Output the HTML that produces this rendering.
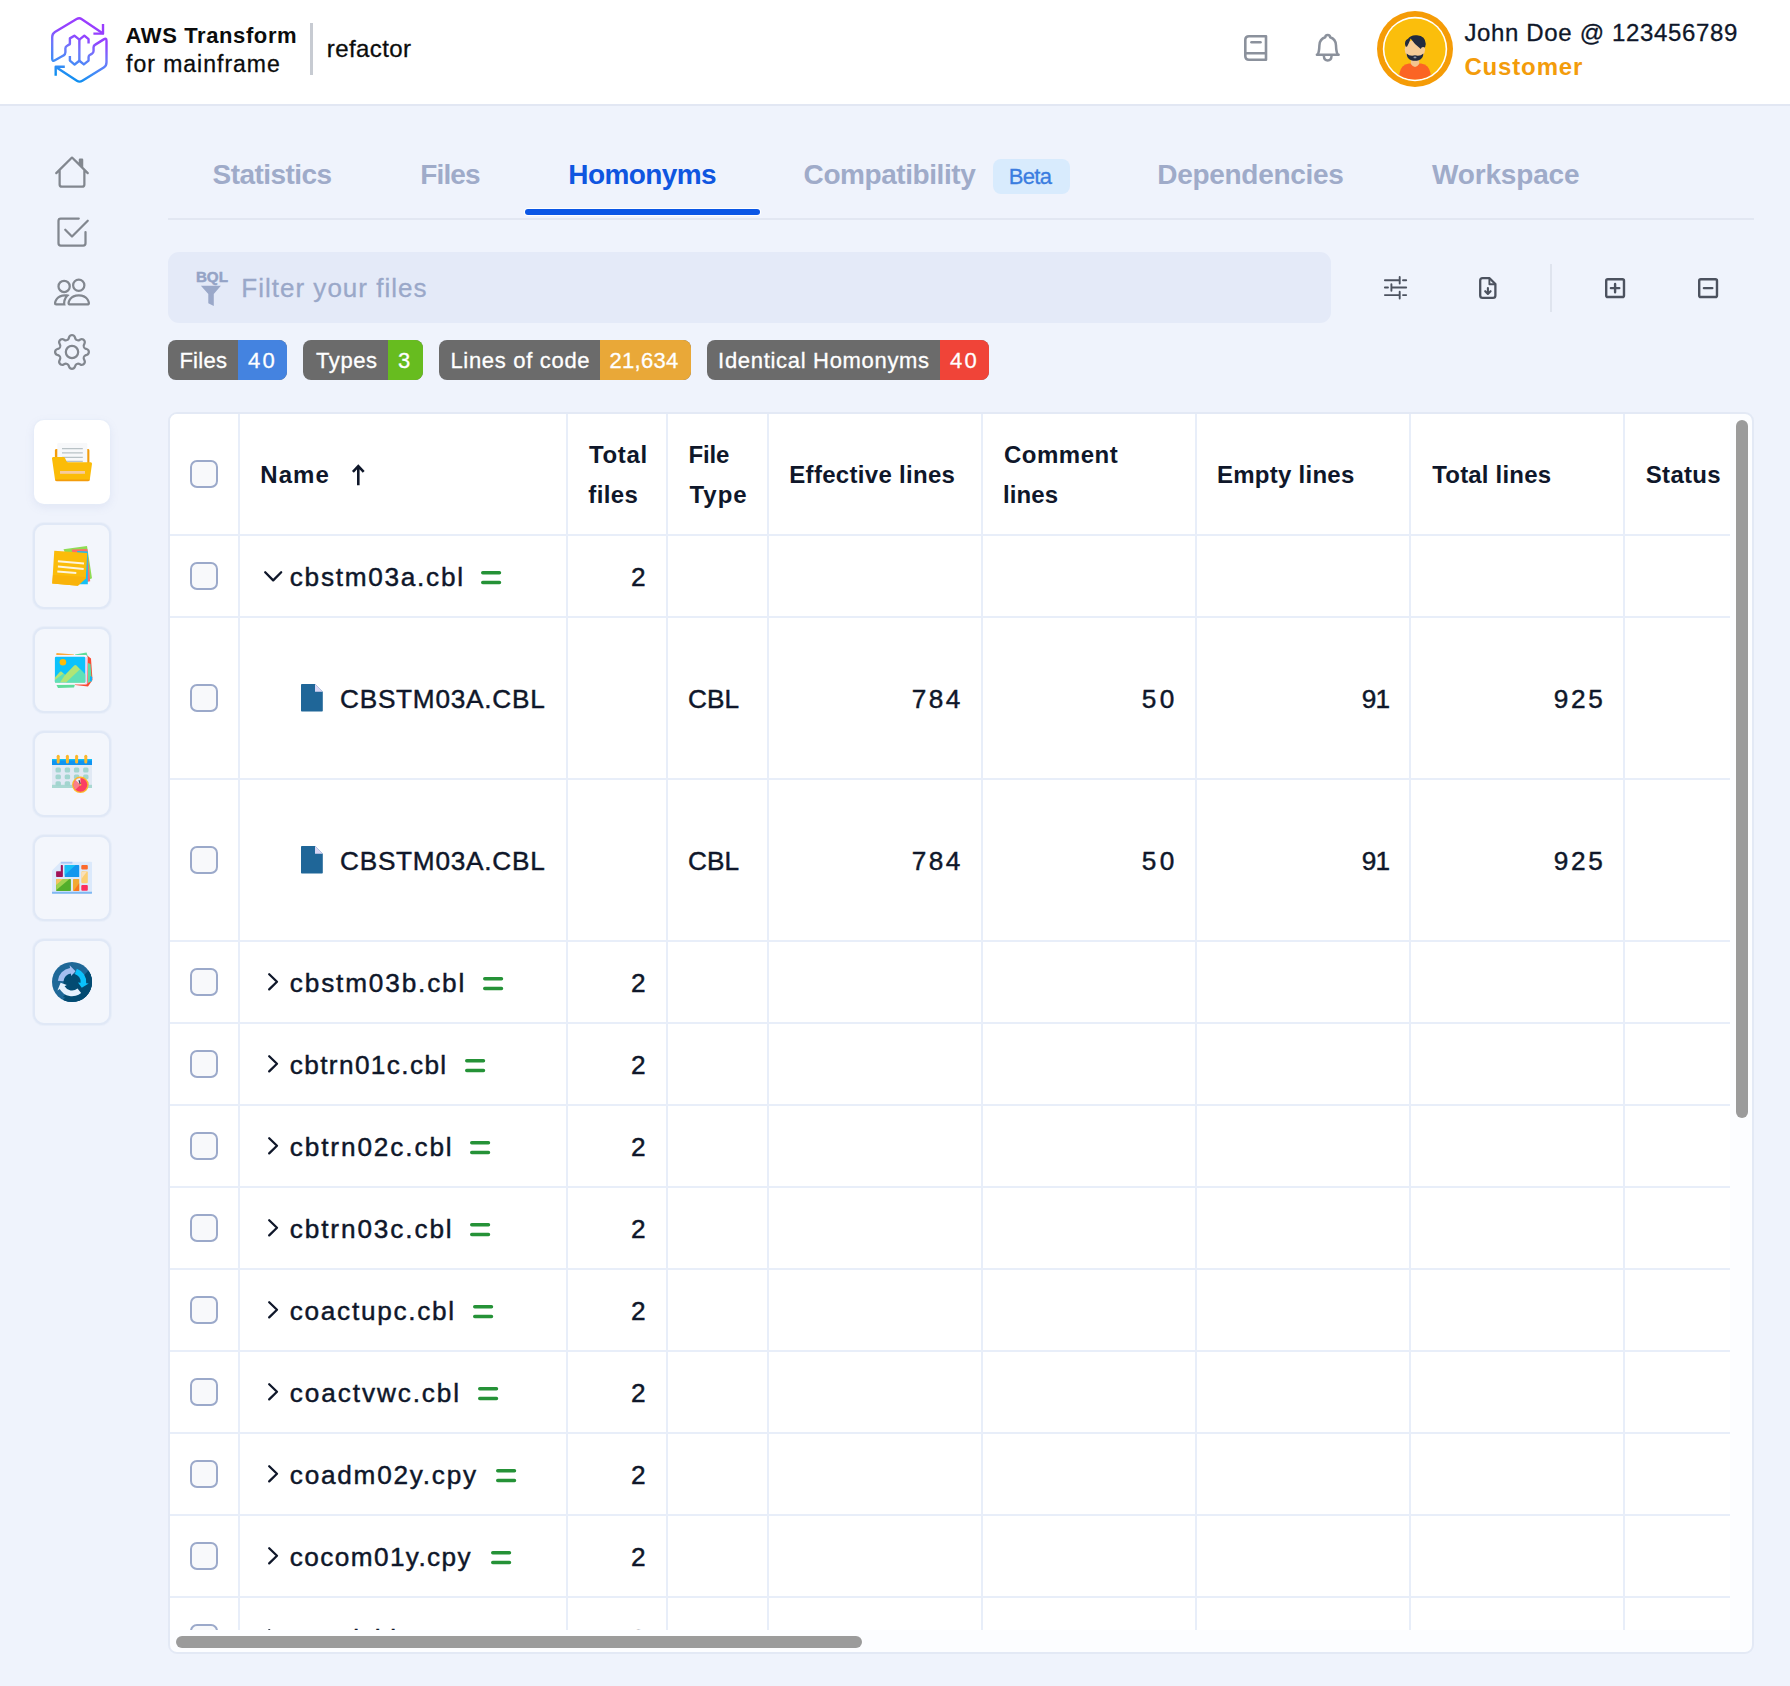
<!DOCTYPE html>
<html lang="en"><head><meta charset="utf-8"><title>AWS Transform for mainframe - refactor</title>
<style>
*{box-sizing:border-box}
html,body{margin:0;padding:0}
@media (max-width:900px){html{zoom:.5}}
body{width:1790px;height:1686px;overflow:hidden;background:#eff3fc;font-family:"Liberation Sans",sans-serif;position:relative}
.t{position:absolute;white-space:nowrap;line-height:1}
.td{-webkit-text-stroke:.45px currentColor}
.bql{-webkit-text-stroke:.5px currentColor}
.uname,.ph,.bdg,.beta,.refac,.aws2{-webkit-text-stroke:.3px currentColor}
.abs{position:absolute}
svg{position:absolute;overflow:visible}
header{position:absolute;left:0;top:0;width:1790px;height:106px;background:#fff;border-bottom:2px solid #e2e7f3}
.vdiv{position:absolute;left:310px;top:23px;width:2.6px;height:52px;background:#c7cbd2}
.card{position:absolute;left:33px;width:78px;height:86px;border:2px solid #e0e8f6;border-radius:11px;background:#f3f6fc;box-shadow:0 0 0 1px rgba(224,232,246,.45)}
.card.on{background:#fff;border:0;margin:1px;width:76px;height:84px;border-radius:10px;box-shadow:0 0 0 1px rgba(230,236,248,.6),0 3px 10px rgba(120,140,190,.13)}
.tabline{position:absolute;left:168px;top:218px;width:1586px;height:2px;background:#e2e7f2}
.tabul{position:absolute;left:525px;top:209px;width:235px;height:6px;border-radius:3px;background:#0b57e6;box-shadow:0 0 0 1px #fff}
.betab{position:absolute;left:993px;top:159px;width:77px;height:35px;border-radius:8px;background:#d8ebfd}
.filter{position:absolute;left:168px;top:252px;width:1163px;height:71px;border-radius:11px;background:#e4eaf8}
.tdiv{position:absolute;left:1550px;top:264px;width:2px;height:48px;background:#dfe4ee}
.bd{position:absolute;top:340px;height:40px;border-radius:8px;background:#6b6b6b;overflow:hidden}
.bd i{position:absolute;top:0;right:0;height:40px}
.tbl{position:absolute;left:168px;top:412px;width:1586px;height:1242px;border:2px solid #e3e9f5;border-radius:9px;background:#fcfdff;overflow:hidden}
.view{position:absolute;left:0;top:0;width:1560px;height:1216px;background:#fff;overflow:hidden}
.hl{position:absolute;left:0;width:1560px;height:2px;background:#e8eef9}
.vl{position:absolute;top:0;width:2px;height:1216px;background:#e8eef9}
.cb{position:absolute;left:20px;width:28px;height:28px;border:2px solid #9ba9ca;border-radius:7px;background:#f8f9fb}
.sbv{position:absolute;left:1566px;top:6px;width:12px;height:698px;border-radius:6px;background:#9b9b9b}
.sbh{position:absolute;left:6px;top:1222px;width:686px;height:12px;border-radius:6px;background:#9b9b9b}
.aws1{font-size:22px;font-weight:700;color:#0b0c0c}
.aws2{font-size:23px;font-weight:400;color:#0b0c0c}
.refac{font-size:24px;font-weight:400;color:#0b0c0c}
.uname{font-size:24px;font-weight:400;color:#0f172a}
.urole{font-size:24px;font-weight:700;color:#f39c0b}
.tab{font-size:28px;font-weight:700;color:#9fabc9}
.tabon{font-size:28px;font-weight:700;color:#0f56e0}
.beta{font-size:22px;font-weight:400;color:#3b7de0}
.bql{font-size:15.2px;font-weight:700;color:#94a3c6}
.ph{font-size:26px;font-weight:400;color:#9aa8c9}
.bdg{font-size:22px;font-weight:400;color:#ffffff}
.th{font-size:24px;font-weight:700;color:#0f172a}
.td{font-size:26.2px;font-weight:400;color:#0f172a}
</style></head>
<body>
<header>
<svg style="left:40px;top:8px" width="80" height="84" viewBox="0 0 1606 1686" ><defs><linearGradient id="lg" gradientUnits="userSpaceOnUse" x1="1000" y1="300" x2="600" y2="1450"><stop offset="0" stop-color="#9a3dff"/><stop offset=".25" stop-color="#9242ff"/><stop offset=".5" stop-color="#6f78fb"/><stop offset=".78" stop-color="#3f8cf6"/><stop offset="1" stop-color="#0a8ff0"/></linearGradient></defs><g fill="none" stroke="url(#lg)" stroke-width="48" stroke-linejoin="round" stroke-linecap="butt"><path d="M1265 510 L840 225 Q790 190 735 222 L300 480 Q245 515 245 580 L245 1020 Q245 1080 300 1050 L470 955 Q510 935 510 890 L510 810 Q510 775 545 757 L600 725 L600 610 L690 555 L790 635 L790 1060"/><path d="M1265 322 L1265 515 L1072 515"/><path d="M790 635 L890 555 L975 625 L975 715"/><path d="M600 965 L600 1055 L695 1135 L790 1058 L880 1132 L975 1055 L975 985 Q975 950 1010 935 L1040 920 Q1075 903 1075 865 L1075 790 Q1075 755 1110 735 L1280 630 Q1335 595 1335 660 L1335 1090 Q1335 1160 1280 1195 L850 1460 Q795 1495 740 1460 L318 1182"/><path d="M498 1180 L315 1180 L315 1362"/></g></svg>
<span class="t aws1" style="left:125.6px;top:25.0px;letter-spacing:0.6px;">AWS Transform</span>
<span class="t aws2" style="left:126.0px;top:52.5px;letter-spacing:0.99px;">for mainframe</span>
<div class="vdiv"></div>
<span class="t refac" style="left:326.8px;top:36.7px;letter-spacing:0.42px;">refactor</span>
<svg style="left:1244px;top:35px" width="24" height="26" viewBox="0 0 24 26" ><g fill="none" stroke="#8b919c" stroke-width="2.6" stroke-linejoin="round" stroke-linecap="round"><path d="M5 1.3 H22 V24.7 H5 Q1.3 24.7 1.3 21 V5 Q1.3 1.3 5 1.3 Z"/><path d="M1.3 18.3 H21.4"/><path d="M7.5 7.2 H16.5"/></g></svg>
<svg style="left:1314px;top:33px" width="28" height="30" viewBox="0 0 28 30" ><g fill="none" stroke="#8b919c" stroke-width="2.5" stroke-linecap="round" stroke-linejoin="round"><path d="M2.9 21.8 H24.6"/><path d="M3.9 21.2 C5.1 19 5.3 15 5.4 12.4 C5.6 8 8 5.2 11.3 4.3 C11.3 2.5 12.4 1.9 13.7 1.9 C15 1.9 16.1 2.5 16.1 4.3 C19.4 5.2 21.8 8 22 12.4 C22.1 15 22.3 19 23.5 21.2"/><path d="M9.9 23.3 C10.2 28.8 17.2 28.8 17.5 23.3"/></g></svg>
<svg style="left:1377px;top:11px" width="76" height="76" viewBox="0 0 76 76" ><defs><clipPath id="avc"><circle cx="38" cy="38" r="30.5"/></clipPath></defs><circle cx="38" cy="38" r="38" fill="#f59c07"/><circle cx="38" cy="38" r="32.2" fill="#fff"/><circle cx="38" cy="38" r="30.6" fill="#fbbe0c"/><g clip-path="url(#avc)"><path d="M21.5 70 L22.5 62 Q24 54 32 52.6 L44 52.6 Q52 54 53.5 62 L54.5 70 Z" fill="#fb6424"/><path d="M33.8 47 L33.8 53 Q38 59 42.2 53 L42.2 47 Z" fill="#f3c58f"/><ellipse cx="37.9" cy="38.6" rx="10.2" ry="9.6" fill="#f6cc96"/><path d="M28.6 35.5 Q26.6 30 31 27.8 Q34 23.5 40 24.3 Q48.5 25 48.8 33 L48 36.5 Q44.5 35.2 43.8 38 Q37 33 33.6 27.6 Q31.8 33 30 35.8 Z" fill="#222b3f"/><path d="M29.6 42.4 Q33 45.6 38 44.2 Q43 45.6 46.4 42.4 Q46.2 47.6 41.8 49.2 Q38 50.4 34.2 49.2 Q29.8 47.6 29.6 42.4 Z" fill="#222b3f"/><ellipse cx="38" cy="46.4" rx="1.5" ry=".9" fill="#8f97a6"/></g></svg>
<span class="t uname" style="left:1464.4px;top:20.7px;letter-spacing:0.65px;">John Doe @ 123456789</span>
<span class="t urole" style="left:1464.4px;top:55.3px;letter-spacing:0.85px;">Customer</span>
</header>
<nav>
<svg style="left:54px;top:154px" width="36" height="36" viewBox="0 0 16 16" ><path fill="#82878f" fill-rule="evenodd" d="M8.707 1.5a1 1 0 0 0-1.414 0L.646 8.146a.5.5 0 0 0 .708.708L2 8.207V13.5A1.5 1.5 0 0 0 3.5 15h9a1.5 1.5 0 0 0 1.5-1.5V8.207l.646.647a.5.5 0 0 0 .708-.708L13 5.793V2.5a.5.5 0 0 0-.5-.5h-1a.5.5 0 0 0-.5.5v1.293L8.707 1.5ZM13 7.207V13.5a.5.5 0 0 1-.5.5h-9a.5.5 0 0 1-.5-.5V7.207l5-5 5 5Z"/></svg>
<svg style="left:54px;top:214px" width="36" height="36" viewBox="0 0 16 16" ><path fill="#82878f" fill-rule="evenodd" d="M3 14.5A1.5 1.5 0 0 1 1.5 13V3A1.5 1.5 0 0 1 3 1.5h8a.5.5 0 0 1 0 1H3a.5.5 0 0 0-.5.5v10a.5.5 0 0 0 .5.5h10a.5.5 0 0 0 .5-.5V8a.5.5 0 0 1 1 0v5a1.5 1.5 0 0 1-1.5 1.5H3z M8.354 10.354l7-7a.5.5 0 0 0-.708-.708L8 9.293 5.354 6.646a.5.5 0 1 0-.708.708l3 3a.5.5 0 0 0 .708 0z"/></svg>
<svg style="left:54px;top:274px" width="36" height="36" viewBox="0 0 16 16" ><path fill="#82878f" fill-rule="evenodd" d="M15 14s1 0 1-1-1-4-5-4-5 3-5 4 1 1 1 1h8Zm-7.978-1A.261.261 0 0 1 7 12.996c.001-.264.167-1.03.76-1.72C8.312 10.629 9.282 10 11 10c1.717 0 2.687.63 3.24 1.276.593.69.758 1.457.76 1.72l-.008.002a.274.274 0 0 1-.014.002H7.022ZM11 7a2 2 0 1 0 0-4 2 2 0 0 0 0 4Zm3-2a3 3 0 1 1-6 0 3 3 0 0 1 6 0ZM6.936 9.28a5.88 5.88 0 0 0-1.23-.247A7.35 7.35 0 0 0 5 9c-4 0-5 3-5 4 0 .667.333 1 1 1h4.216A2.238 2.238 0 0 1 5 13c0-1.01.377-2.042 1.09-2.904.243-.294.526-.569.846-.816ZM4.92 10A5.493 5.493 0 0 0 4 13H1c0-.26.164-1.03.76-1.724.545-.636 1.492-1.256 3.16-1.275ZM1.5 5.5a3 3 0 1 1 6 0 3 3 0 0 1-6 0Zm3-2a2 2 0 1 0 0 4 2 2 0 0 0 0-4Z"/></svg>
<svg style="left:54px;top:334px" width="36" height="36" viewBox="0 0 16 16" ><path fill="#82878f" fill-rule="evenodd" d="M8 4.754a3.246 3.246 0 1 0 0 6.492 3.246 3.246 0 0 0 0-6.492zM5.754 8a2.246 2.246 0 1 1 4.492 0 2.246 2.246 0 0 1-4.492 0z M9.796 1.343c-.527-1.79-3.065-1.79-3.592 0l-.094.319a.873.873 0 0 1-1.255.52l-.292-.16c-1.64-.892-3.433.902-2.54 2.541l.159.292a.873.873 0 0 1-.52 1.255l-.319.094c-1.79.527-1.79 3.065 0 3.592l.319.094a.873.873 0 0 1 .52 1.255l-.16.292c-.892 1.64.901 3.434 2.541 2.54l.292-.159a.873.873 0 0 1 1.255.52l.094.319c.527 1.79 3.065 1.79 3.592 0l.094-.319a.873.873 0 0 1 1.255-.52l.292.16c1.64.893 3.434-.902 2.54-2.541l-.159-.292a.873.873 0 0 1 .52-1.255l.319-.094c1.79-.527 1.79-3.065 0-3.592l-.319-.094a.873.873 0 0 1-.52-1.255l.16-.292c.893-1.64-.902-3.433-2.541-2.54l-.292.159a.873.873 0 0 1-1.255-.52l-.094-.319zm-2.633.283c.246-.835 1.428-.835 1.674 0l.094.319a1.873 1.873 0 0 0 2.693 1.115l.291-.16c.764-.415 1.6.42 1.184 1.185l-.159.292a1.873 1.873 0 0 0 1.116 2.692l.318.094c.835.246.835 1.428 0 1.674l-.319.094a1.873 1.873 0 0 0-1.115 2.693l.16.291c.415.764-.42 1.6-1.185 1.184l-.291-.159a1.873 1.873 0 0 0-2.693 1.116l-.094.318c-.246.835-1.428.835-1.674 0l-.094-.319a1.873 1.873 0 0 0-2.692-1.115l-.292.16c-.764.415-1.6-.42-1.184-1.185l.159-.291A1.873 1.873 0 0 0 1.945 8.93l-.319-.094c-.835-.246-.835-1.428 0-1.674l.319-.094A1.873 1.873 0 0 0 3.06 4.377l-.16-.292c-.415-.764.42-1.6 1.185-1.184l.292.159a1.873 1.873 0 0 0 2.692-1.115l.094-.319z"/></svg>
<div class="card on" style="top:419px"></div>
<svg style="left:33px;top:419px" width="78" height="86" viewBox="0 0 78 86" ><path d="M56.3 449 H88 Q89.4 449 89.4 450.4 V466 H54.9 V450.4 Q54.9 449 56.3 449Z" fill="#f39c0b" transform="translate(-33,-419)"/><g transform="translate(-33,-419)"><rect x="57.3" y="443" width="30" height="21" rx="1.2" fill="#f7f8fa"/><g stroke="#b9c2c6" stroke-width="1.3"><path d="M62 448.6H82.8M62 452.8H82.8M62 457.4H82.8M66 461.4H82.8"/></g><path d="M53.2 457.1 H63.6 Q64.6 457.1 65 458 L66.6 461.6 Q67 462.3 68 462.3 H90.6 Q92.2 462.3 92 463.8 L89.8 479.6 Q89.6 481 88.2 481 H56.6 Q55.2 481 55 479.6 L52 458.6 Q51.8 457.1 53.2 457.1Z" fill="#fbbc08"/><path d="M55 479.6 Q55.2 481.2 56.6 481.2 H88.2 Q89.6 481.2 89.8 479.6 Z" fill="#f39c0b"/><rect x="60" y="471" width="25" height="2.8" fill="#f6cb9d"/></g></svg>
<div class="card" style="top:523px"></div>
<svg style="left:33px;top:523px" width="78" height="86" viewBox="0 0 78 86" ><g transform="translate(-33,-523)"><polygon points="63.5,549.2 87,546 92,578.3 78,584.6" fill="#8fdc54"/><polygon points="71.8,549.5 87.3,549 90.2,581.2 78,584" fill="#fb6d6d"/><polygon points="77.2,551 87.8,551.6 87.8,584.2 78,584.2" fill="#16c0f6"/><polygon points="54.3,550.7 87.2,553.1 85.8,578.3 77.8,585.7 52.2,583.6" fill="#fbbc0a"/><polygon points="53,575 86,577 85.8,578.3 77.8,585.7 52.2,583.6" fill="#f9b30a"/><g stroke="#fdf4dc" stroke-width="2" stroke-linecap="butt"><path d="M57.9 561.2 L84 563.5 M57.9 566.6 L83.7 568.9 M57.3 571.5 L76.3 573"/></g></g></svg>
<div class="card" style="top:627px"></div>
<svg style="left:33px;top:627px" width="78" height="86" viewBox="0 0 78 86" ><g transform="translate(-33,-627)"><polygon points="56.5,653 74,654.5 73,658 56,657" fill="#fba93a"/><polygon points="75,654.5 86.5,652.4 88,657 76,658" fill="#5fdc9a"/><polygon points="87.5,655.8 91,658.5 92.5,680 88,686.5 75,685 75,680 87,680" fill="#fb4a33"/><polygon points="88,663 90.5,664 91.8,681 88,683" fill="#5fdca5"/><polygon points="90,676 92.3,677 91.7,681.5 89.8,681" fill="#12b3f6"/><polygon points="56.5,685 75,684.5 74,687.6 58,688" fill="#5fdc9a"/><rect x="52.8" y="655" width="34.4" height="29.6" rx="1.5" fill="#f7f5fd"/><rect x="85.2" y="657" width="2" height="27" fill="#e3d8fb"/><rect x="54.9" y="656.8" width="30.3" height="25.8" rx="1.2" fill="#0cc2fb"/><circle cx="62.9" cy="662.2" r="3.3" fill="#fbbc0a"/><path d="M54.9 677.5 L60 671.8 Q60.8 671 61.7 671.8 L65 675 L74.2 665.6 Q75.4 664.6 76.5 665.6 L85.2 674.5 V681.4 Q85.2 682.6 84 682.6 H56.1 Q54.9 682.6 54.9 681.4Z" fill="#b0e576"/><path d="M54.9 680 L63.5 673.5 L65 675 L60 682.6 H56.1 Q54.9 682.6 54.9 681.4Z M66 682.6 L80 669.3 L85.2 674.5 V681.4 Q85.2 682.6 84 682.6Z" fill="#5fe0b8"/></g></svg>
<div class="card" style="top:731px"></div>
<svg style="left:33px;top:731px" width="78" height="86" viewBox="0 0 78 86" ><g transform="translate(-33,-731)"><rect x="52" y="764" width="40" height="24" rx="1" fill="#e1e9f4"/><rect x="52" y="784.8" width="40" height="3.2" fill="#a9d8d2"/><rect x="55.5" y="767.6" width="5.4" height="4.8" rx="1.5" fill="#a2d5cf"/><rect x="55.5" y="774.4" width="5.4" height="4.8" rx="1.5" fill="#a2d5cf"/><rect x="55.5" y="781.2" width="5.4" height="4.8" rx="1.5" fill="#a2d5cf"/><rect x="64.7" y="767.6" width="5.4" height="4.8" rx="1.5" fill="#a2d5cf"/><rect x="64.7" y="774.4" width="5.4" height="4.8" rx="1.5" fill="#a2d5cf"/><rect x="64.7" y="781.2" width="5.4" height="4.8" rx="1.5" fill="#a2d5cf"/><rect x="73.89999999999999" y="767.6" width="5.4" height="4.8" rx="1.5" fill="#a2d5cf"/><rect x="73.89999999999999" y="774.4" width="5.4" height="4.8" rx="1.5" fill="#a2d5cf"/><rect x="73.89999999999999" y="781.2" width="5.4" height="4.8" rx="1.5" fill="#a2d5cf"/><rect x="83.1" y="767.6" width="5.4" height="4.8" rx="1.5" fill="#a2d5cf"/><rect x="83.1" y="774.4" width="5.4" height="4.8" rx="1.5" fill="#a2d5cf"/><rect x="83.1" y="781.2" width="5.4" height="4.8" rx="1.5" fill="#a2d5cf"/><path d="M53 759 H91 Q92 759 92 760 V765 H52 V760 Q52 759 53 759Z" fill="#1094f1"/><rect x="52" y="759" width="40" height="1.4" fill="#0cc2fb"/><rect x="56.7" y="754.8" width="3" height="8.8" rx="1.5" fill="#fbb92c"/><rect x="65.9" y="754.8" width="3" height="8.8" rx="1.5" fill="#fbb92c"/><rect x="75.1" y="754.8" width="3" height="8.8" rx="1.5" fill="#fbb92c"/><rect x="84.3" y="754.8" width="3" height="8.8" rx="1.5" fill="#fbb92c"/><circle cx="80.4" cy="784.8" r="8.3" fill="#fbb92c"/><circle cx="80.4" cy="784.8" r="6.9" fill="#fb3f63"/><path d="M80.4 784.8 L75.5 779.9 A6.9 6.9 0 0 0 75.5 789.7Z" fill="#f9808a"/><path d="M80.4 784.8 L80.4 777.9 A6.9 6.9 0 0 0 75.5 779.9Z" fill="#eef1f6"/><path d="M80.4 784.8 L79 780.2" stroke="#353b4d" stroke-width="1.2" fill="none"/><circle cx="80.4" cy="784.8" r="1" fill="#fbb92c"/></g></svg>
<div class="card" style="top:835px"></div>
<svg style="left:33px;top:835px" width="78" height="86" viewBox="0 0 78 86" ><g transform="translate(-33,-835)"><path d="M60.8 861.8 H91.1 Q92.0 861.8 92.0 862.7 V892.9 Q92.0 893.8 91.1 893.8 H52.8 Q52.0 893.8 52.0 892.9 V870.4 Z" fill="#dbe9fb"/><path d="M52.0 891.8 H92.0 V892.9 Q92.0 893.8 91.1 893.8 H52.8 Q52.0 893.8 52.0 892.9Z" fill="#7fb8f2"/><path d="M60.8 861.8 H72.4 V863.6 H60.8Z" fill="#a9c6f5"/><rect x="60.8" y="865.1" width="2.1" height="6.8" rx="0.6" fill="#a01358"/><rect x="56.1" y="871.3" width="6.8" height="5.6" rx="0.6" fill="#a01358"/><rect x="64.7" y="865.1" width="14.5" height="11.9" rx="0.6" fill="#1397ee"/><polygon points="64.7,865.1 75.7,865.1 64.7,874.9" fill="#17c0f6"/><rect x="81.3" y="865.1" width="6.5" height="4.4" rx="1" fill="#fb6a2d"/><rect x="81.3" y="871.3" width="6.5" height="11.9" rx="1.2" fill="#fbcf72"/><polygon points="81.3,871.9 87.2,871.3 81.3,879.0" fill="#f9e0b8"/><rect x="56.1" y="879.0" width="14.8" height="11.9" rx="0.6" fill="#52ae2b"/><polygon points="56.1,879.0 69.4,879.0 56.1,890.3" fill="#a0d24f"/><polygon points="56.1,879.0 62.9,879.0 56.1,884.9" fill="#f8c163"/><rect x="73.0" y="879.0" width="6.2" height="11.9" rx="0.6" fill="#f2a933"/><polygon points="79.2,883.2 79.2,890.9 73.6,890.9" fill="#f9761f"/><rect x="81.3" y="884.9" width="6.5" height="5.9" rx="1" fill="#fb2d5d"/></g></svg>
<div class="card" style="top:939px"></div>
<svg style="left:33px;top:939px" width="78" height="86" viewBox="0 0 78 86" ><defs><clipPath id="syc"><circle cx="39" cy="43" r="20"/></clipPath></defs><circle cx="39" cy="43" r="20" fill="#1e6898"/><g clip-path="url(#syc)"><polygon points="62,28 62,66 25,66 " fill="#034b72"/><polygon points="55.5,31.5 62,28 62,66 30,58" fill="#034b72"/><circle cx="39" cy="43" r="8.6" fill="#034b72"/></g><path d="M24.85 41.76 A14.2 14.2 0 0 1 37.02 28.94 L36.66 26.36 L42.52 32.16 L38.16 37.06 L37.80 34.48 A8.6 8.6 0 0 0 30.43 42.25Z" fill="#a5bff0"/><path d="M43.86 29.66 A14.2 14.2 0 0 1 53.15 44.24 L55.74 44.46 L48.77 48.87 L44.98 43.52 L47.57 43.75 A8.6 8.6 0 0 0 41.94 34.92Z" fill="#0bc1fb"/><path d="M48.13 53.88 A14.2 14.2 0 0 1 26.70 50.10 L24.45 51.40 L27.63 43.80 L33.80 46.00 L31.55 47.30 A8.6 8.6 0 0 0 44.53 49.59Z" fill="#e4f0fd"/></svg>
</nav>
<main>
<span class="t tab" style="left:212.6px;top:160.5px;letter-spacing:-0.55px;">Statistics</span>
<span class="t tab" style="left:420.3px;top:160.5px;letter-spacing:-0.88px;">Files</span>
<span class="t tabon" style="left:568.3px;top:160.5px;letter-spacing:-0.6px;">Homonyms</span>
<span class="t tab" style="left:803.6px;top:160.5px;letter-spacing:-0.43px;">Compatibility</span>
<div class="betab"></div>
<span class="t beta" style="left:1008.7px;top:166.0px;letter-spacing:-0.67px;">Beta</span>
<span class="t tab" style="left:1157.3px;top:160.5px;letter-spacing:-0.3px;">Dependencies</span>
<span class="t tab" style="left:1432.0px;top:160.5px;letter-spacing:-0.16px;">Workspace</span>
<div class="tabline"></div><div class="tabul"></div>
<div class="filter"></div>
<span class="t bql" style="left:195.9px;top:269.3px;letter-spacing:0.01px;">BQL</span>
<svg style="left:201px;top:286px" width="19.7" height="19.7" viewBox="0 0 19.7 19.7" ><path d="M-0.1 -0.2 H19.9 L12.8 7.9 V19.9 L7.3 17.2 V7.9 Z" fill="#9aa8c9"/></svg>
<span class="t ph" style="left:241.3px;top:275.0px;letter-spacing:1.01px;">Filter your files</span>
<svg style="left:1383.6px;top:276.1px" width="23.1" height="23.5" viewBox="0 0 23.1 23.5" ><g stroke="#4c525f" stroke-width="1.9" fill="none" stroke-linecap="round"><path d="M0.9 4.2 H15.7 M19 4.2 H22.2 M15.7 0.9 V7.5"/><path d="M0.9 11.5 H4 M7.4 11.5 H22.2 M7.4 8.2 V14.8"/><path d="M0.9 19.1 H15.7 M19 19.1 H22.2 M15.7 15.8 V22.6"/></g></svg>
<svg style="left:1479.4px;top:277px" width="17.2" height="22" viewBox="0 0 17.2 22" ><g stroke="#4c525f" stroke-width="2.3" fill="none" stroke-linejoin="round" stroke-linecap="round"><path d="M3.6 1.2 H10.6 L16.4 7 V18.4 Q16.4 20.8 14 20.8 H3.6 Q1.2 20.8 1.2 18.4 V3.6 Q1.2 1.2 3.6 1.2Z"/><path d="M10.4 1.8 V7.2 H16" stroke-width="1.9"/><path d="M8.9 11 V16.4 M6.2 14.2 L8.9 16.9 L11.6 14.2" stroke-width="2.1"/></g></svg>
<div class="tdiv"></div>
<svg style="left:1605.3px;top:278.2px" width="20.2" height="20.2" viewBox="0 0 20.2 20.2" ><g stroke="#4c525f" stroke-width="2.4" fill="none" stroke-linecap="round"><rect x="1.2" y="1.2" width="17.8" height="17.8" rx="1.6"/><path d="M5.9 10.1 H14.3 M10.1 5.9 V14.3"/></g></svg>
<svg style="left:1698px;top:278.2px" width="20.2" height="20.2" viewBox="0 0 20.2 20.2" ><g stroke="#4c525f" stroke-width="2.4" fill="none" stroke-linecap="round"><rect x="1.2" y="1.2" width="17.8" height="17.8" rx="1.6"/><path d="M5.9 10.1 H14.3"/></g></svg>
<div class="bd" style="left:168px;width:119px"><i style="width:49px;background:#4483e0"></i></div>
<span class="t bdg" style="left:179.4px;top:349.6px;letter-spacing:0.29px;">Files</span>
<span class="t bdg" style="left:248.0px;top:349.6px;letter-spacing:2.26px;">40</span>
<div class="bd" style="left:303px;width:120px"><i style="width:35px;background:#67bc1f"></i></div>
<span class="t bdg" style="left:316.0px;top:349.6px;letter-spacing:0.58px;">Types</span>
<span class="t bdg" style="left:398.0px;top:349.6px;">3</span>
<div class="bd" style="left:439px;width:252px"><i style="width:91px;background:#e9a838"></i></div>
<span class="t bdg" style="left:450.4px;top:349.6px;letter-spacing:0.69px;">Lines of code</span>
<span class="t bdg" style="left:609.6px;top:349.6px;letter-spacing:0.27px;">21,634</span>
<div class="bd" style="left:707px;width:282px"><i style="width:49px;background:#f04438"></i></div>
<span class="t bdg" style="left:718.1px;top:349.6px;letter-spacing:0.69px;">Identical Homonyms</span>
<span class="t bdg" style="left:950.0px;top:349.6px;letter-spacing:2.16px;">40</span>
<div class="tbl"><div class="view">
<div class="hl" style="top:120px"></div>
<div class="hl" style="top:202px"></div>
<div class="hl" style="top:364px"></div>
<div class="hl" style="top:526px"></div>
<div class="hl" style="top:608px"></div>
<div class="hl" style="top:690px"></div>
<div class="hl" style="top:772px"></div>
<div class="hl" style="top:854px"></div>
<div class="hl" style="top:936px"></div>
<div class="hl" style="top:1018px"></div>
<div class="hl" style="top:1100px"></div>
<div class="hl" style="top:1182px"></div>
<div class="vl" style="left:68px"></div>
<div class="vl" style="left:396px"></div>
<div class="vl" style="left:496px"></div>
<div class="vl" style="left:597px"></div>
<div class="vl" style="left:811px"></div>
<div class="vl" style="left:1025px"></div>
<div class="vl" style="left:1239px"></div>
<div class="vl" style="left:1453px"></div>
<div class="cb" style="top:46px"></div>
<div class="cb" style="top:148px"></div>
<div class="cb" style="top:270px"></div>
<div class="cb" style="top:432px"></div>
<div class="cb" style="top:554px"></div>
<div class="cb" style="top:636px"></div>
<div class="cb" style="top:718px"></div>
<div class="cb" style="top:800px"></div>
<div class="cb" style="top:882px"></div>
<div class="cb" style="top:964px"></div>
<div class="cb" style="top:1046px"></div>
<div class="cb" style="top:1128px"></div>
<div class="cb" style="top:1210px"></div>
<span class="t th" style="left:90.3px;top:48.7px;letter-spacing:1.03px;">Name</span>
<svg style="left:182.10000000000002px;top:50.10000000000002px" width="12.6" height="21.2" viewBox="0 0 12.6 21.2" ><g stroke="#0f172a" stroke-width="2.6" fill="none" stroke-linecap="butt" stroke-linejoin="miter"><path d="M6.3 21.2 V1.6 M0.9 7.9 L6.3 2.2 L11.7 7.9"/></g></svg>
<span class="t th" style="left:419.0px;top:28.7px;letter-spacing:0.66px;">Total</span>
<span class="t th" style="left:418.3px;top:68.7px;letter-spacing:0.36px;">files</span>
<span class="t th" style="left:518.5px;top:28.7px;letter-spacing:-0.13px;">File</span>
<span class="t th" style="left:519.5px;top:68.7px;letter-spacing:0.97px;">Type</span>
<span class="t th" style="left:619.3px;top:48.7px;letter-spacing:0.3px;">Effective lines</span>
<span class="t th" style="left:833.9px;top:28.7px;letter-spacing:0.54px;">Comment</span>
<span class="t th" style="left:832.9px;top:68.7px;letter-spacing:0.16px;">lines</span>
<span class="t th" style="left:1047.0px;top:48.7px;letter-spacing:0.26px;">Empty lines</span>
<span class="t th" style="left:1262.2px;top:48.7px;letter-spacing:0.2px;">Total lines</span>
<span class="t th" style="left:1475.8px;top:48.7px;letter-spacing:0.3px;">Status</span>
<svg style="left:93.60000000000002px;top:157.29999999999995px" width="18.4" height="10.7" viewBox="0 0 18.4 10.7" ><path d="M1.2 1.2 L9.2 9.4 L17.2 1.2" stroke="#0f172a" stroke-width="2.3" fill="none" stroke-linecap="round" stroke-linejoin="round"/></svg>
<span class="t td" style="left:119.8px;top:149.6px;letter-spacing:1.72px;">cbstm03a.cbl</span>
<svg style="left:311.4px;top:157px" width="20.2" height="13.2" viewBox="0 0 20.2 13.2" ><g stroke="#259237" stroke-width="3.5" stroke-linecap="round"><path d="M1.75 1.75 H18.5 M1.75 11.4 H18.5"/></g></svg>
<span class="t td" style="left:460.9px;top:149.6px;">2</span>
<svg style="left:98.19999999999999px;top:559.2px" width="10.2" height="17.6" viewBox="0 0 10.2 17.6" ><path d="M1.2 1.2 L9 8.8 L1.2 16.4" stroke="#0f172a" stroke-width="2.3" fill="none" stroke-linecap="round" stroke-linejoin="round"/></svg>
<span class="t td" style="left:119.8px;top:555.6px;letter-spacing:1.84px;">cbstm03b.cbl</span>
<svg style="left:312.7px;top:563px" width="20.2" height="13.2" viewBox="0 0 20.2 13.2" ><g stroke="#259237" stroke-width="3.5" stroke-linecap="round"><path d="M1.75 1.75 H18.5 M1.75 11.4 H18.5"/></g></svg>
<span class="t td" style="left:460.9px;top:555.6px;">2</span>
<svg style="left:98.19999999999999px;top:641.2px" width="10.2" height="17.6" viewBox="0 0 10.2 17.6" ><path d="M1.2 1.2 L9 8.8 L1.2 16.4" stroke="#0f172a" stroke-width="2.3" fill="none" stroke-linecap="round" stroke-linejoin="round"/></svg>
<span class="t td" style="left:119.8px;top:637.6px;letter-spacing:1.38px;">cbtrn01c.cbl</span>
<svg style="left:294.5px;top:645px" width="20.2" height="13.2" viewBox="0 0 20.2 13.2" ><g stroke="#259237" stroke-width="3.5" stroke-linecap="round"><path d="M1.75 1.75 H18.5 M1.75 11.4 H18.5"/></g></svg>
<span class="t td" style="left:460.9px;top:637.6px;">2</span>
<svg style="left:98.19999999999999px;top:723.2px" width="10.2" height="17.6" viewBox="0 0 10.2 17.6" ><path d="M1.2 1.2 L9 8.8 L1.2 16.4" stroke="#0f172a" stroke-width="2.3" fill="none" stroke-linecap="round" stroke-linejoin="round"/></svg>
<span class="t td" style="left:119.8px;top:719.6px;letter-spacing:1.88px;">cbtrn02c.cbl</span>
<svg style="left:300.0px;top:727px" width="20.2" height="13.2" viewBox="0 0 20.2 13.2" ><g stroke="#259237" stroke-width="3.5" stroke-linecap="round"><path d="M1.75 1.75 H18.5 M1.75 11.4 H18.5"/></g></svg>
<span class="t td" style="left:460.9px;top:719.6px;">2</span>
<svg style="left:98.19999999999999px;top:805.2px" width="10.2" height="17.6" viewBox="0 0 10.2 17.6" ><path d="M1.2 1.2 L9 8.8 L1.2 16.4" stroke="#0f172a" stroke-width="2.3" fill="none" stroke-linecap="round" stroke-linejoin="round"/></svg>
<span class="t td" style="left:119.8px;top:801.6px;letter-spacing:1.88px;">cbtrn03c.cbl</span>
<svg style="left:300.0px;top:809px" width="20.2" height="13.2" viewBox="0 0 20.2 13.2" ><g stroke="#259237" stroke-width="3.5" stroke-linecap="round"><path d="M1.75 1.75 H18.5 M1.75 11.4 H18.5"/></g></svg>
<span class="t td" style="left:460.9px;top:801.6px;">2</span>
<svg style="left:98.19999999999999px;top:887.2px" width="10.2" height="17.6" viewBox="0 0 10.2 17.6" ><path d="M1.2 1.2 L9 8.8 L1.2 16.4" stroke="#0f172a" stroke-width="2.3" fill="none" stroke-linecap="round" stroke-linejoin="round"/></svg>
<span class="t td" style="left:119.8px;top:883.6px;letter-spacing:1.7px;">coactupc.cbl</span>
<svg style="left:302.5px;top:891px" width="20.2" height="13.2" viewBox="0 0 20.2 13.2" ><g stroke="#259237" stroke-width="3.5" stroke-linecap="round"><path d="M1.75 1.75 H18.5 M1.75 11.4 H18.5"/></g></svg>
<span class="t td" style="left:460.9px;top:883.6px;">2</span>
<svg style="left:98.19999999999999px;top:969.2px" width="10.2" height="17.6" viewBox="0 0 10.2 17.6" ><path d="M1.2 1.2 L9 8.8 L1.2 16.4" stroke="#0f172a" stroke-width="2.3" fill="none" stroke-linecap="round" stroke-linejoin="round"/></svg>
<span class="t td" style="left:119.8px;top:965.6px;letter-spacing:1.9px;">coactvwc.cbl</span>
<svg style="left:307.5px;top:973px" width="20.2" height="13.2" viewBox="0 0 20.2 13.2" ><g stroke="#259237" stroke-width="3.5" stroke-linecap="round"><path d="M1.75 1.75 H18.5 M1.75 11.4 H18.5"/></g></svg>
<span class="t td" style="left:460.9px;top:965.6px;">2</span>
<svg style="left:98.19999999999999px;top:1051.2px" width="10.2" height="17.6" viewBox="0 0 10.2 17.6" ><path d="M1.2 1.2 L9 8.8 L1.2 16.4" stroke="#0f172a" stroke-width="2.3" fill="none" stroke-linecap="round" stroke-linejoin="round"/></svg>
<span class="t td" style="left:119.8px;top:1047.6px;letter-spacing:1.76px;">coadm02y.cpy</span>
<svg style="left:326.2px;top:1055px" width="20.2" height="13.2" viewBox="0 0 20.2 13.2" ><g stroke="#259237" stroke-width="3.5" stroke-linecap="round"><path d="M1.75 1.75 H18.5 M1.75 11.4 H18.5"/></g></svg>
<span class="t td" style="left:460.9px;top:1047.6px;">2</span>
<svg style="left:98.19999999999999px;top:1133.2px" width="10.2" height="17.6" viewBox="0 0 10.2 17.6" ><path d="M1.2 1.2 L9 8.8 L1.2 16.4" stroke="#0f172a" stroke-width="2.3" fill="none" stroke-linecap="round" stroke-linejoin="round"/></svg>
<span class="t td" style="left:119.8px;top:1129.6px;letter-spacing:1.4px;">cocom01y.cpy</span>
<svg style="left:320.7px;top:1137px" width="20.2" height="13.2" viewBox="0 0 20.2 13.2" ><g stroke="#259237" stroke-width="3.5" stroke-linecap="round"><path d="M1.75 1.75 H18.5 M1.75 11.4 H18.5"/></g></svg>
<span class="t td" style="left:460.9px;top:1129.6px;">2</span>
<svg style="left:98.19999999999999px;top:1215.2px" width="10.2" height="17.6" viewBox="0 0 10.2 17.6" ><path d="M1.2 1.2 L9 8.8 L1.2 16.4" stroke="#0f172a" stroke-width="2.3" fill="none" stroke-linecap="round" stroke-linejoin="round"/></svg>
<span class="t td" style="left:119.8px;top:1211.6px;letter-spacing:1.29px;">cocrdsl.bms</span>
<svg style="left:291.5px;top:1219px" width="20.2" height="13.2" viewBox="0 0 20.2 13.2" ><g stroke="#259237" stroke-width="3.5" stroke-linecap="round"><path d="M1.75 1.75 H18.5 M1.75 11.4 H18.5"/></g></svg>
<span class="t td" style="left:460.9px;top:1211.6px;">2</span>
<svg style="left:131.2px;top:270.20000000000005px" width="21.8" height="27.6" viewBox="0 0 21.8 27.6" ><path d="M0 0.8 Q0 0 0.8 0 H14 L21.8 7.8 V26.8 Q21.8 27.6 21 27.6 H0.8 Q0 27.6 0 26.8Z" fill="#1f6698"/><path d="M14 0 L21.8 7.8 H14Z" fill="#dad7f5"/></svg>
<span class="t td" style="left:170.0px;top:271.6px;letter-spacing:0.75px;">CBSTM03A.CBL</span>
<span class="t td" style="left:517.9px;top:271.6px;letter-spacing:0.16px;">CBL</span>
<span class="t td" style="left:741.7px;top:271.6px;letter-spacing:2.49px;">784</span>
<span class="t td" style="left:971.8px;top:271.6px;letter-spacing:3.44px;">50</span>
<span class="t td" style="left:1191.8px;top:271.6px;letter-spacing:-0.86px;">91</span>
<span class="t td" style="left:1383.7px;top:271.6px;letter-spacing:2.69px;">925</span>
<svg style="left:131.2px;top:432.20000000000005px" width="21.8" height="27.6" viewBox="0 0 21.8 27.6" ><path d="M0 0.8 Q0 0 0.8 0 H14 L21.8 7.8 V26.8 Q21.8 27.6 21 27.6 H0.8 Q0 27.6 0 26.8Z" fill="#1f6698"/><path d="M14 0 L21.8 7.8 H14Z" fill="#dad7f5"/></svg>
<span class="t td" style="left:170.0px;top:433.6px;letter-spacing:0.75px;">CBSTM03A.CBL</span>
<span class="t td" style="left:517.9px;top:433.6px;letter-spacing:0.16px;">CBL</span>
<span class="t td" style="left:741.7px;top:433.6px;letter-spacing:2.49px;">784</span>
<span class="t td" style="left:971.8px;top:433.6px;letter-spacing:3.44px;">50</span>
<span class="t td" style="left:1191.8px;top:433.6px;letter-spacing:-0.86px;">91</span>
<span class="t td" style="left:1383.7px;top:433.6px;letter-spacing:2.69px;">925</span>
</div><div class="sbv"></div><div class="sbh"></div></div>
</main>
</body></html>
